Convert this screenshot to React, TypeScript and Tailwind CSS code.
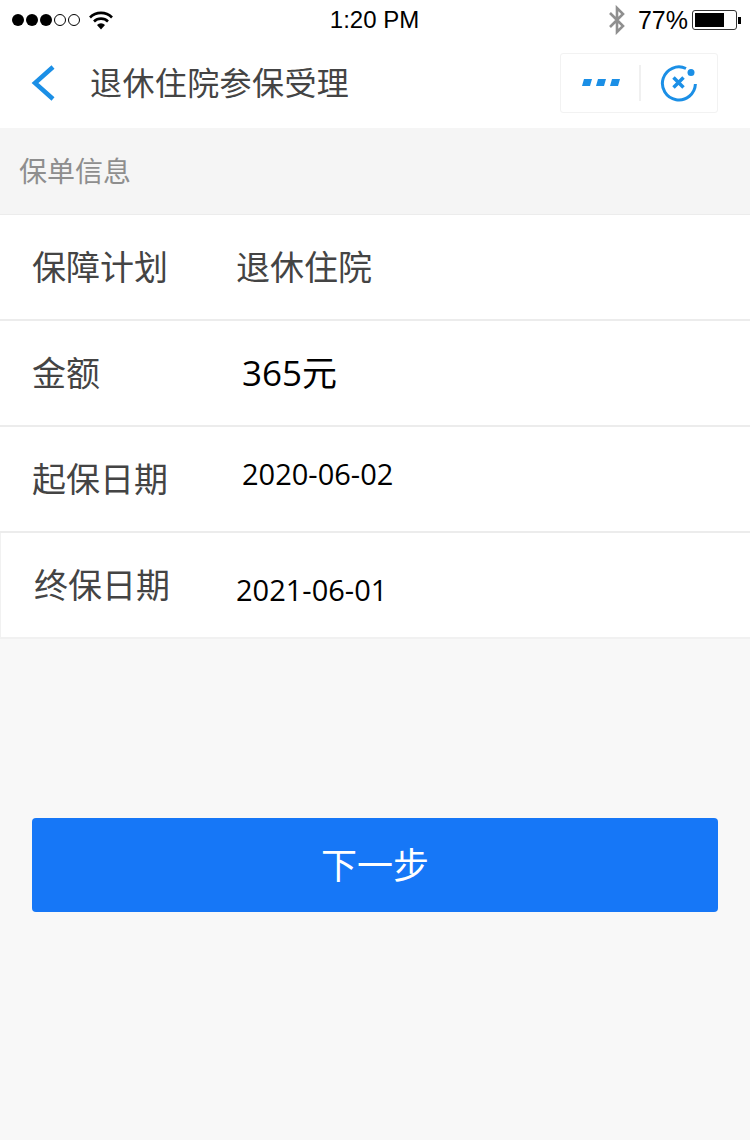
import React from 'react';

const cjk = '"Noto Sans CJK SC", "Liberation Sans", sans-serif';

function StatusBar() {
	return (
		<div className="flex h-10 items-center bg-white pl-3 pr-[9px] text-[24px] text-black" style={{ fontFamily: '"Liberation Sans", sans-serif' }}>
			<div className="flex flex-1 items-center gap-[2px]">
				<span className="h-[12px] w-[12px] rounded-full bg-black" />
				<span className="h-[12px] w-[12px] rounded-full bg-black" />
				<span className="h-[12px] w-[12px] rounded-full bg-black" />
				<span className="h-[12px] w-[12px] rounded-full border border-black" />
				<span className="h-[12px] w-[12px] rounded-full border border-black" />
				<svg className="ml-[7px]" width="24" height="20" viewBox="0 0 24 20">
					<path d="M1 7.5a15.5 15.5 0 0 1 22 0" fill="none" stroke="#000" strokeWidth="2.6" />
					<path d="M5 11.5a10 10 0 0 1 14 0" fill="none" stroke="#000" strokeWidth="2.6" />
					<path d="M8 15a5.5 5.5 0 0 1 8 0l-4 4.5z" fill="#000" />
				</svg>
			</div>
			<div className="mr-[4px] leading-none">1:20 PM</div>
			<div className="flex flex-1 items-center justify-end">
				<svg width="18" height="30" viewBox="0 0 18 30" className="mr-[12px]">
					<path d="M2 8l13 13-6 6V3l6 6L2 22" fill="none" stroke="#8f8f8f" strokeWidth="2.6" />
				</svg>
				<span className="text-[25px] leading-none">77%</span>
				<div className="ml-[4px] flex items-center">
					<div className="flex h-5 w-[45px] rounded-[3px] border border-[#333] p-[2px]">
						<div className="h-full w-[29px] bg-black" />
					</div>
					<div className="ml-[1px] h-[7px] w-[3px] bg-black" />
				</div>
			</div>
		</div>
	);
}

function NavBar() {
	return (
		<div className="flex h-[88px] items-center bg-white px-[32px] pb-[2px]">
			<svg width="24" height="36" viewBox="0 0 24 36" className="-ml-[1px]">
				<path d="M22 2L4 18l18 16" fill="none" stroke="#1b8fe6" strokeWidth="4.5" />
			</svg>
			<div className="ml-[35px] flex-1 pb-[4px] text-[32px] leading-none tracking-[0.4px] text-[#444]" style={{ fontFamily: cjk }}>
				退休住院参保受理
			</div>
			<div className="flex h-[60px] w-[158px] items-center rounded-[3px] border border-[#f2f2f2]">
				<div className="flex w-[78px] items-center justify-center pl-[2px]">
					<svg width="40" height="10" viewBox="0 0 40 10">
						<path d="M3 1h8l-2 7H1zM17 1h8l-2 7h-8zM31 1h8l-2 7h-8z" fill="#1b8fe6" />
					</svg>
				</div>
				<div className="h-[36px] w-[2px] bg-[#f0f0f0]" />
				<div className="flex flex-1 items-center justify-center">
					<svg width="38" height="38" viewBox="0 0 38 38">
						<path d="M26 4.5A16.5 16.5 0 1 0 35.4 20" fill="none" stroke="#1b8fe6" strokeWidth="3" />
						<circle cx="31" cy="8.5" r="3.5" fill="#1b8fe6" />
						<path d="M13.5 13.5l10 10M23.5 13.5l-10 10" stroke="#1b8fe6" strokeWidth="3.5" />
					</svg>
				</div>
			</div>
		</div>
	);
}

function Row({ label, value, valueClass, labelClass, rowClass }: { label: string; value: string; valueClass: string; labelClass?: string; rowClass?: string }) {
	return (
		<div className={`flex h-[106px] items-center bg-white ${rowClass ?? 'border-b-2 border-[#ececec]'}`}>
			<div className={`w-[236px] pb-[4px] text-[34px] text-[#444] ${labelClass ?? 'pl-[32px]'}`} style={{ fontFamily: cjk }}>
				{label}
			</div>
			<div className={valueClass} style={{ fontFamily: '"Open Sans", "Noto Sans CJK SC", sans-serif' }}>
				{value}
			</div>
		</div>
	);
}

export default function App() {
	return (
		<div className="flex h-[1140px] w-[750px] flex-col overflow-hidden bg-[#f8f8f8]">
			<StatusBar />
			<NavBar />
			<div className="flex h-[87px] items-center border-b border-[#ececec] bg-[#f5f5f5] pb-[2px] pl-[19px] text-[28px] text-[#8e8e8e]" style={{ fontFamily: cjk }}>
				保单信息
			</div>
			<Row label="保障计划" value="退休住院" valueClass="text-[34px] text-[#444]" />
			<Row label="金额" value="365元" valueClass="pl-[6px] text-[35px] text-black" />
			<Row label="起保日期" value="2020-06-02" valueClass="pb-[10px] pl-[6px] text-[29px] text-black" />
			<Row
				label="终保日期"
				labelClass="pl-[33px]"
				rowClass="border-b-2 border-l border-[#f1f1f1]"
				value="2021-06-01"
				valueClass="-ml-[1px] pt-[10px] text-[29px] text-black"
			/>
			<div className="mx-[32px] mt-[179px] flex h-[94px] items-center justify-center rounded-[4px] bg-[#1677f7] pb-[4px] text-[36px] text-white" style={{ fontFamily: cjk }}>
				下一步
			</div>
		</div>
	);
}
